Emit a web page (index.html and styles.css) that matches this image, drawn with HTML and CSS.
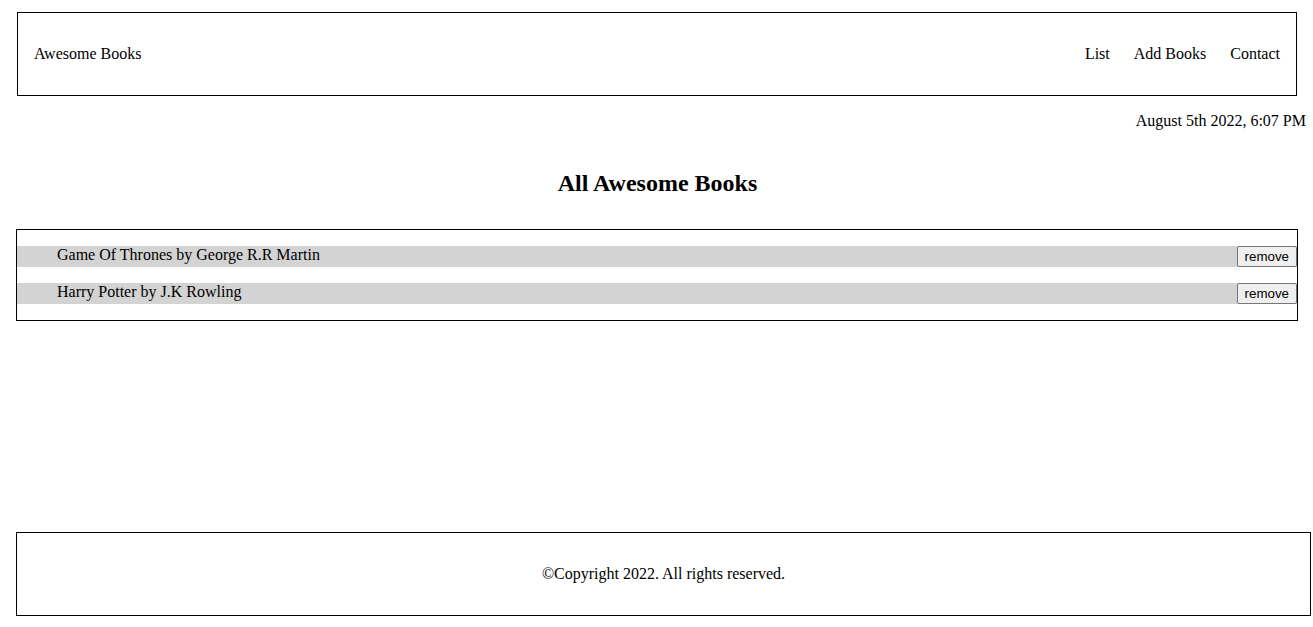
FILE: index.html
```html
<!DOCTYPE html>
<html lang="en">
<head>
<meta charset="utf-8">
<title>Awesome Books</title>
<link rel="stylesheet" href="styles.css">
</head>
<body>
<header class="navbar">
  <span class="brand">Awesome Books</span>
  <nav class="nav-links">
    <a href="#" class="nav-link">List</a>
    <a href="#" class="nav-link">Add Books</a>
    <a href="#" class="nav-link">Contact</a>
  </nav>
</header>
<p class="date">August 5th 2022, 6:07 PM</p>
<main class="main">
  <h2 class="title">All Awesome Books</h2>
  <section class="book-box">
    <ul class="book-list">
      <li class="book-item"><span class="book-text">Game Of Thrones by George R.R Martin</span><button class="remove-btn">remove</button></li>
      <li class="book-item"><span class="book-text">Harry Potter by J.K Rowling</span><button class="remove-btn">remove</button></li>
    </ul>
  </section>
</main>
<footer class="footer">
  <p class="copy">©Copyright 2022. All rights reserved.</p>
</footer>
</body>
</html>
```
FILE: styles.css
```css
html, body {
  margin: 0;
  padding: 0;
  background: #fff;
}

body {
  font-family: "Liberation Serif", "Times New Roman", serif;
  font-size: 16px;
  color: #000;
}

.navbar {
  box-sizing: border-box;
  margin: 12px 16px 0 17px;
  height: 84px;
  border: 1px solid #000;
  padding: 0 16px;
  display: flex;
  align-items: center;
  justify-content: space-between;
}

.nav-links {
  display: flex;
  gap: 24px;
}

.nav-link {
  color: #000;
  text-decoration: none;
}

.date {
  margin: 16px 7px 0 0;
  text-align: right;
  line-height: 18px;
}

.main {
  display: flex;
  flex-direction: column;
}

.title {
  margin: 39px 0 0;
  padding-left: 2px;
  text-align: center;
  font-size: 24px;
  font-weight: bold;
  line-height: 28px;
}

.book-box {
  box-sizing: border-box;
  margin: 32px 15px 0 16px;
  border: 1px solid #000;
}

.book-list {
  list-style: none;
  margin: 16px 0;
  padding: 0;
  display: flex;
  flex-direction: column;
  gap: 16px;
}

.book-item {
  display: flex;
  justify-content: space-between;
  align-items: flex-start;
  background: #d3d3d3;
  padding-left: 40px;
  height: 21px;
}

.book-text {
  line-height: 18px;
}

.remove-btn {
  font-family: "Liberation Sans", Arial, sans-serif;
  font-size: 13.333px;
  height: 21px;
  padding: 1px 7px;
  color: #000;
  background: #efefef;
  border: 1px solid #767676;
  border-radius: 2px;
}

.footer {
  box-sizing: border-box;
  margin: 211px 2px 0 16px;
  height: 84px;
  border: 1px solid #000;
  display: flex;
  align-items: center;
  justify-content: center;
}

.copy {
  margin: 0;
  line-height: 18px;
}
```
